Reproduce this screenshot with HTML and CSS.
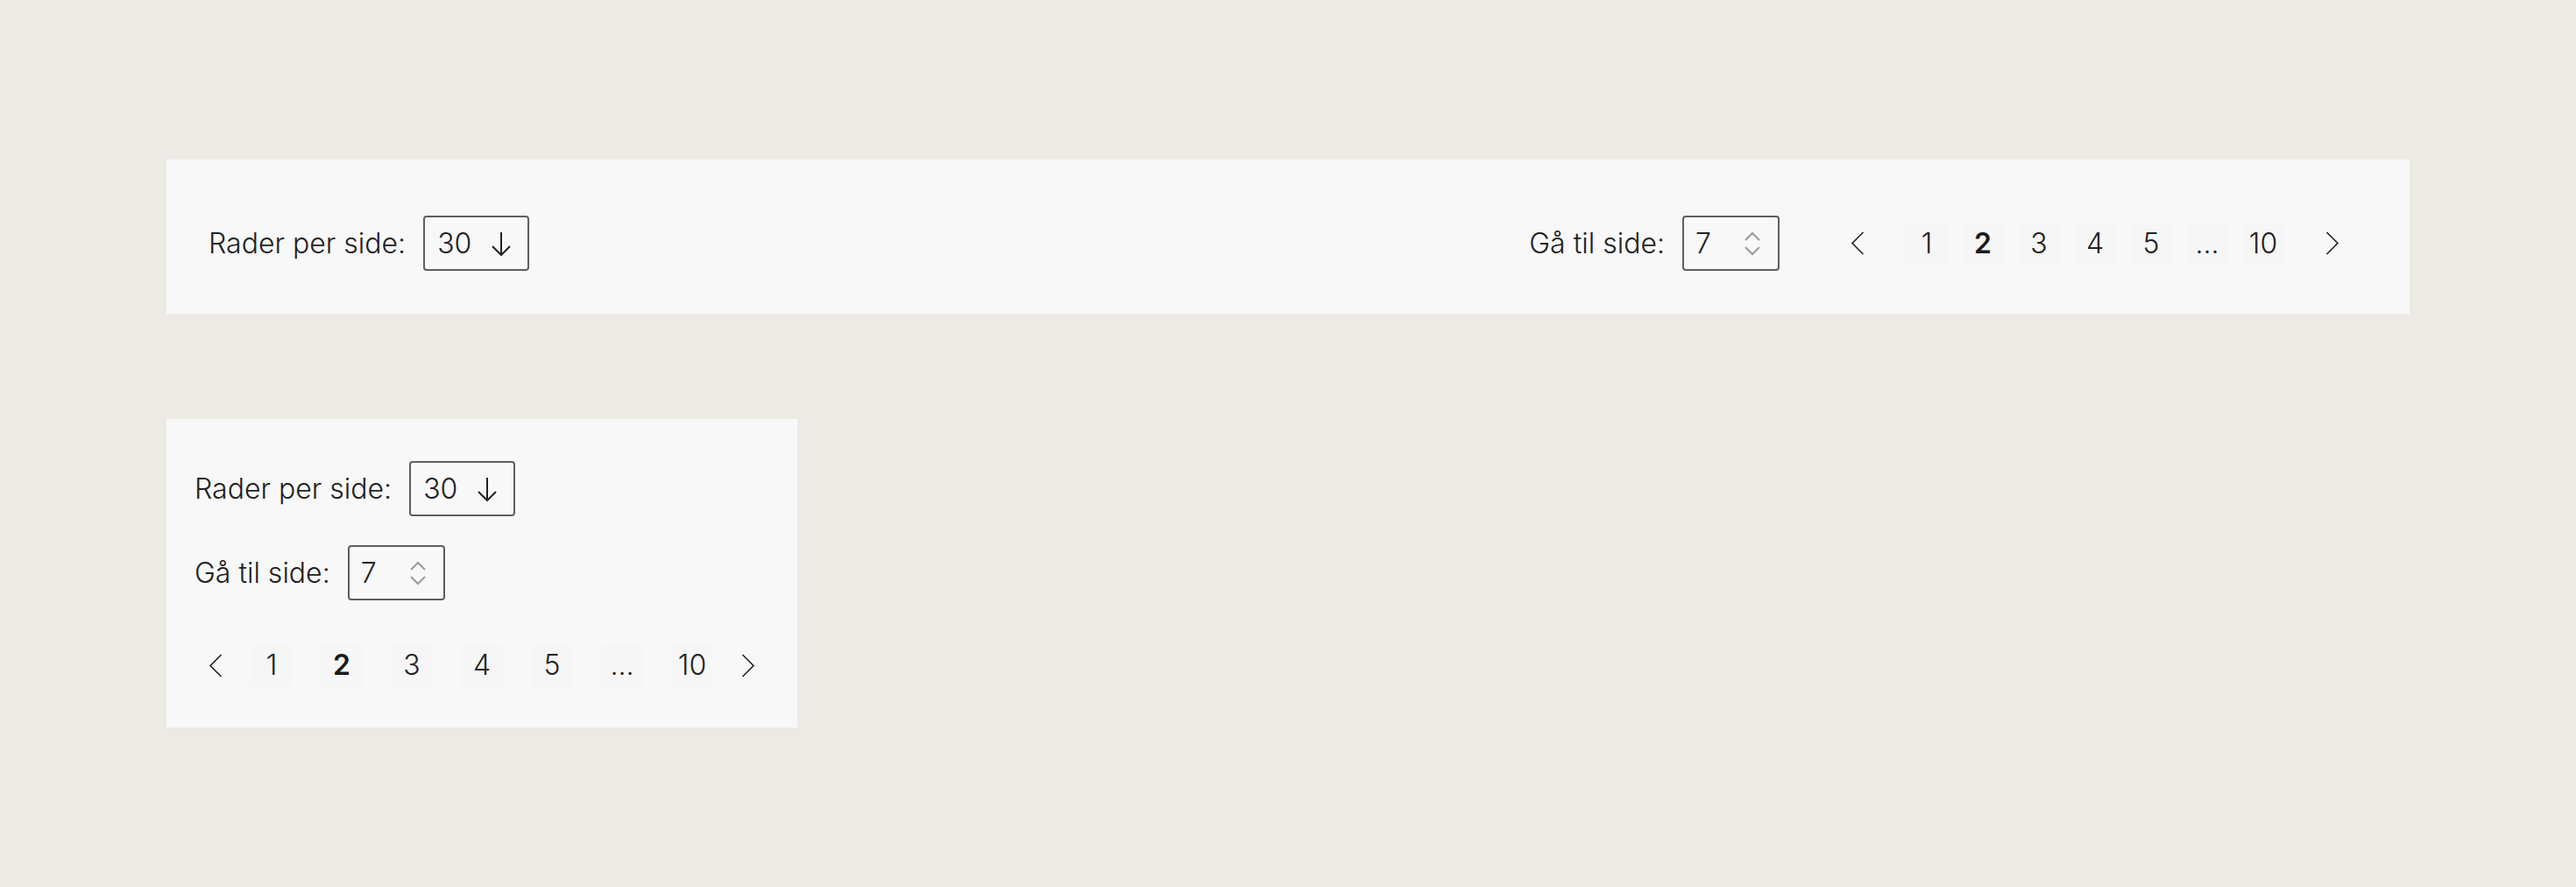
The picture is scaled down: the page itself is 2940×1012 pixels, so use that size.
FILE: index.html
```html
<!DOCTYPE html>
<html lang="no">
<head>
<meta charset="utf-8">
<title>Paginering</title>
<link rel="stylesheet" href="styles.css">
</head>
<body>
<main class="page">
  <section class="bar">
    <div class="field">
      <span class="label">Rader per side:</span>
      <div class="select">
        <span class="value">30</span>
        <svg class="arrow" width="22" height="28" viewBox="0 0 22 28"><path d="M11 1V27M1 17L11 27L21 17" fill="none" stroke="#222" stroke-width="2"/></svg>
      </div>
    </div>
    <div class="spacer"></div>
    <div class="field goto">
      <span class="label">Gå til side:</span>
      <div class="number">
        <span class="value">7</span>
        <svg class="spin" width="18" height="28" viewBox="0 0 18 28"><path d="M1 10L9 2L17 10M1 18L9 26L17 18" fill="none" stroke="#9a9a9a" stroke-width="2"/></svg>
      </div>
    </div>
    <nav class="pager pager-wide">
      <span class="nav"><svg width="16" height="27" viewBox="0 0 16 27"><path d="M14.5 1L2 13.5L14.5 26" fill="none" stroke="#222" stroke-width="1.6"/></svg></span>
      <div class="pages">
        <span class="pg">1</span>
        <span class="pg current">2</span>
        <span class="pg">3</span>
        <span class="pg">4</span>
        <span class="pg">5</span>
        <span class="pg">...</span>
        <span class="pg">10</span>
      </div>
      <span class="nav"><svg width="16" height="27" viewBox="0 0 16 27"><path d="M1.5 1L14 13.5L1.5 26" fill="none" stroke="#222" stroke-width="1.6"/></svg></span>
    </nav>
  </section>

  <section class="card">
    <div class="field">
      <span class="label">Rader per side:</span>
      <div class="select">
        <span class="value">30</span>
        <svg class="arrow" width="22" height="28" viewBox="0 0 22 28"><path d="M11 1V27M1 17L11 27L21 17" fill="none" stroke="#222" stroke-width="2"/></svg>
      </div>
    </div>
    <div class="field row2">
      <span class="label">Gå til side:</span>
      <div class="number">
        <span class="value">7</span>
        <svg class="spin" width="18" height="28" viewBox="0 0 18 28"><path d="M1 10L9 2L17 10M1 18L9 26L17 18" fill="none" stroke="#9a9a9a" stroke-width="2"/></svg>
      </div>
    </div>
    <nav class="pager pager-narrow">
      <span class="nav"><svg width="16" height="27" viewBox="0 0 16 27"><path d="M14.5 1L2 13.5L14.5 26" fill="none" stroke="#222" stroke-width="1.6"/></svg></span>
      <div class="pages">
        <span class="pg">1</span>
        <span class="pg current">2</span>
        <span class="pg">3</span>
        <span class="pg">4</span>
        <span class="pg">5</span>
        <span class="pg">...</span>
        <span class="pg">10</span>
      </div>
      <span class="nav"><svg width="16" height="27" viewBox="0 0 16 27"><path d="M1.5 1L14 13.5L1.5 26" fill="none" stroke="#222" stroke-width="1.6"/></svg></span>
    </nav>
  </section>
</main>
</body>
</html>
```
FILE: styles.css
```css
html, body {
  margin: 0;
  padding: 0;
}

body {
  background: #edeae5;
  font-family: Inter, "Liberation Sans", Arial, sans-serif;
  font-weight: 300;
  font-size: 32px;
  color: #222222;
}

.page {
  padding: 182px 190px 0 190px;
}

.bar {
  display: flex;
  align-items: center;
  background: #f8f8f8;
  padding: 64px 64px 49px 48px;
}

.spacer {
  flex: 1;
}

.field {
  display: flex;
  align-items: center;
  gap: 20px;
}

.label {
  line-height: 40px;
  white-space: nowrap;
}

.select,
.number {
  box-sizing: border-box;
  height: 63px;
  border: 2px solid #5e5e5e;
  border-radius: 4px;
  display: flex;
  align-items: center;
  justify-content: space-between;
}

.select {
  width: 121px;
  padding: 0 19px 0 14px;
}

.number {
  width: 111px;
  padding: 0 20px 0 13px;
}

.value {
  line-height: 40px;
}

.arrow,
.spin {
  display: block;
}

.goto {
  margin-right: 65px;
}

.pager {
  display: flex;
  align-items: center;
}

.pages {
  display: flex;
  align-items: center;
}

.nav {
  width: 48px;
  height: 48px;
  display: flex;
  align-items: center;
  justify-content: center;
}

.pg {
  width: 48px;
  height: 48px;
  display: flex;
  align-items: center;
  justify-content: center;
  background: #f6f6f6;
  line-height: 1;
}

.pg.current {
  font-weight: 600;
  color: #1a1a1a;
}

.pager-wide {
  gap: 31px;
}

.pager-wide .pages {
  gap: 16px;
}

.card {
  box-sizing: border-box;
  width: 720px;
  margin-top: 120px;
  background: #f8f8f8;
  padding: 48px 32px 47px 32px;
}

.row2 {
  margin-top: 33px;
}

.pager-narrow {
  margin-top: 50px;
  gap: 16px;
}

.pager-narrow .pages {
  gap: 32px;
}
```
